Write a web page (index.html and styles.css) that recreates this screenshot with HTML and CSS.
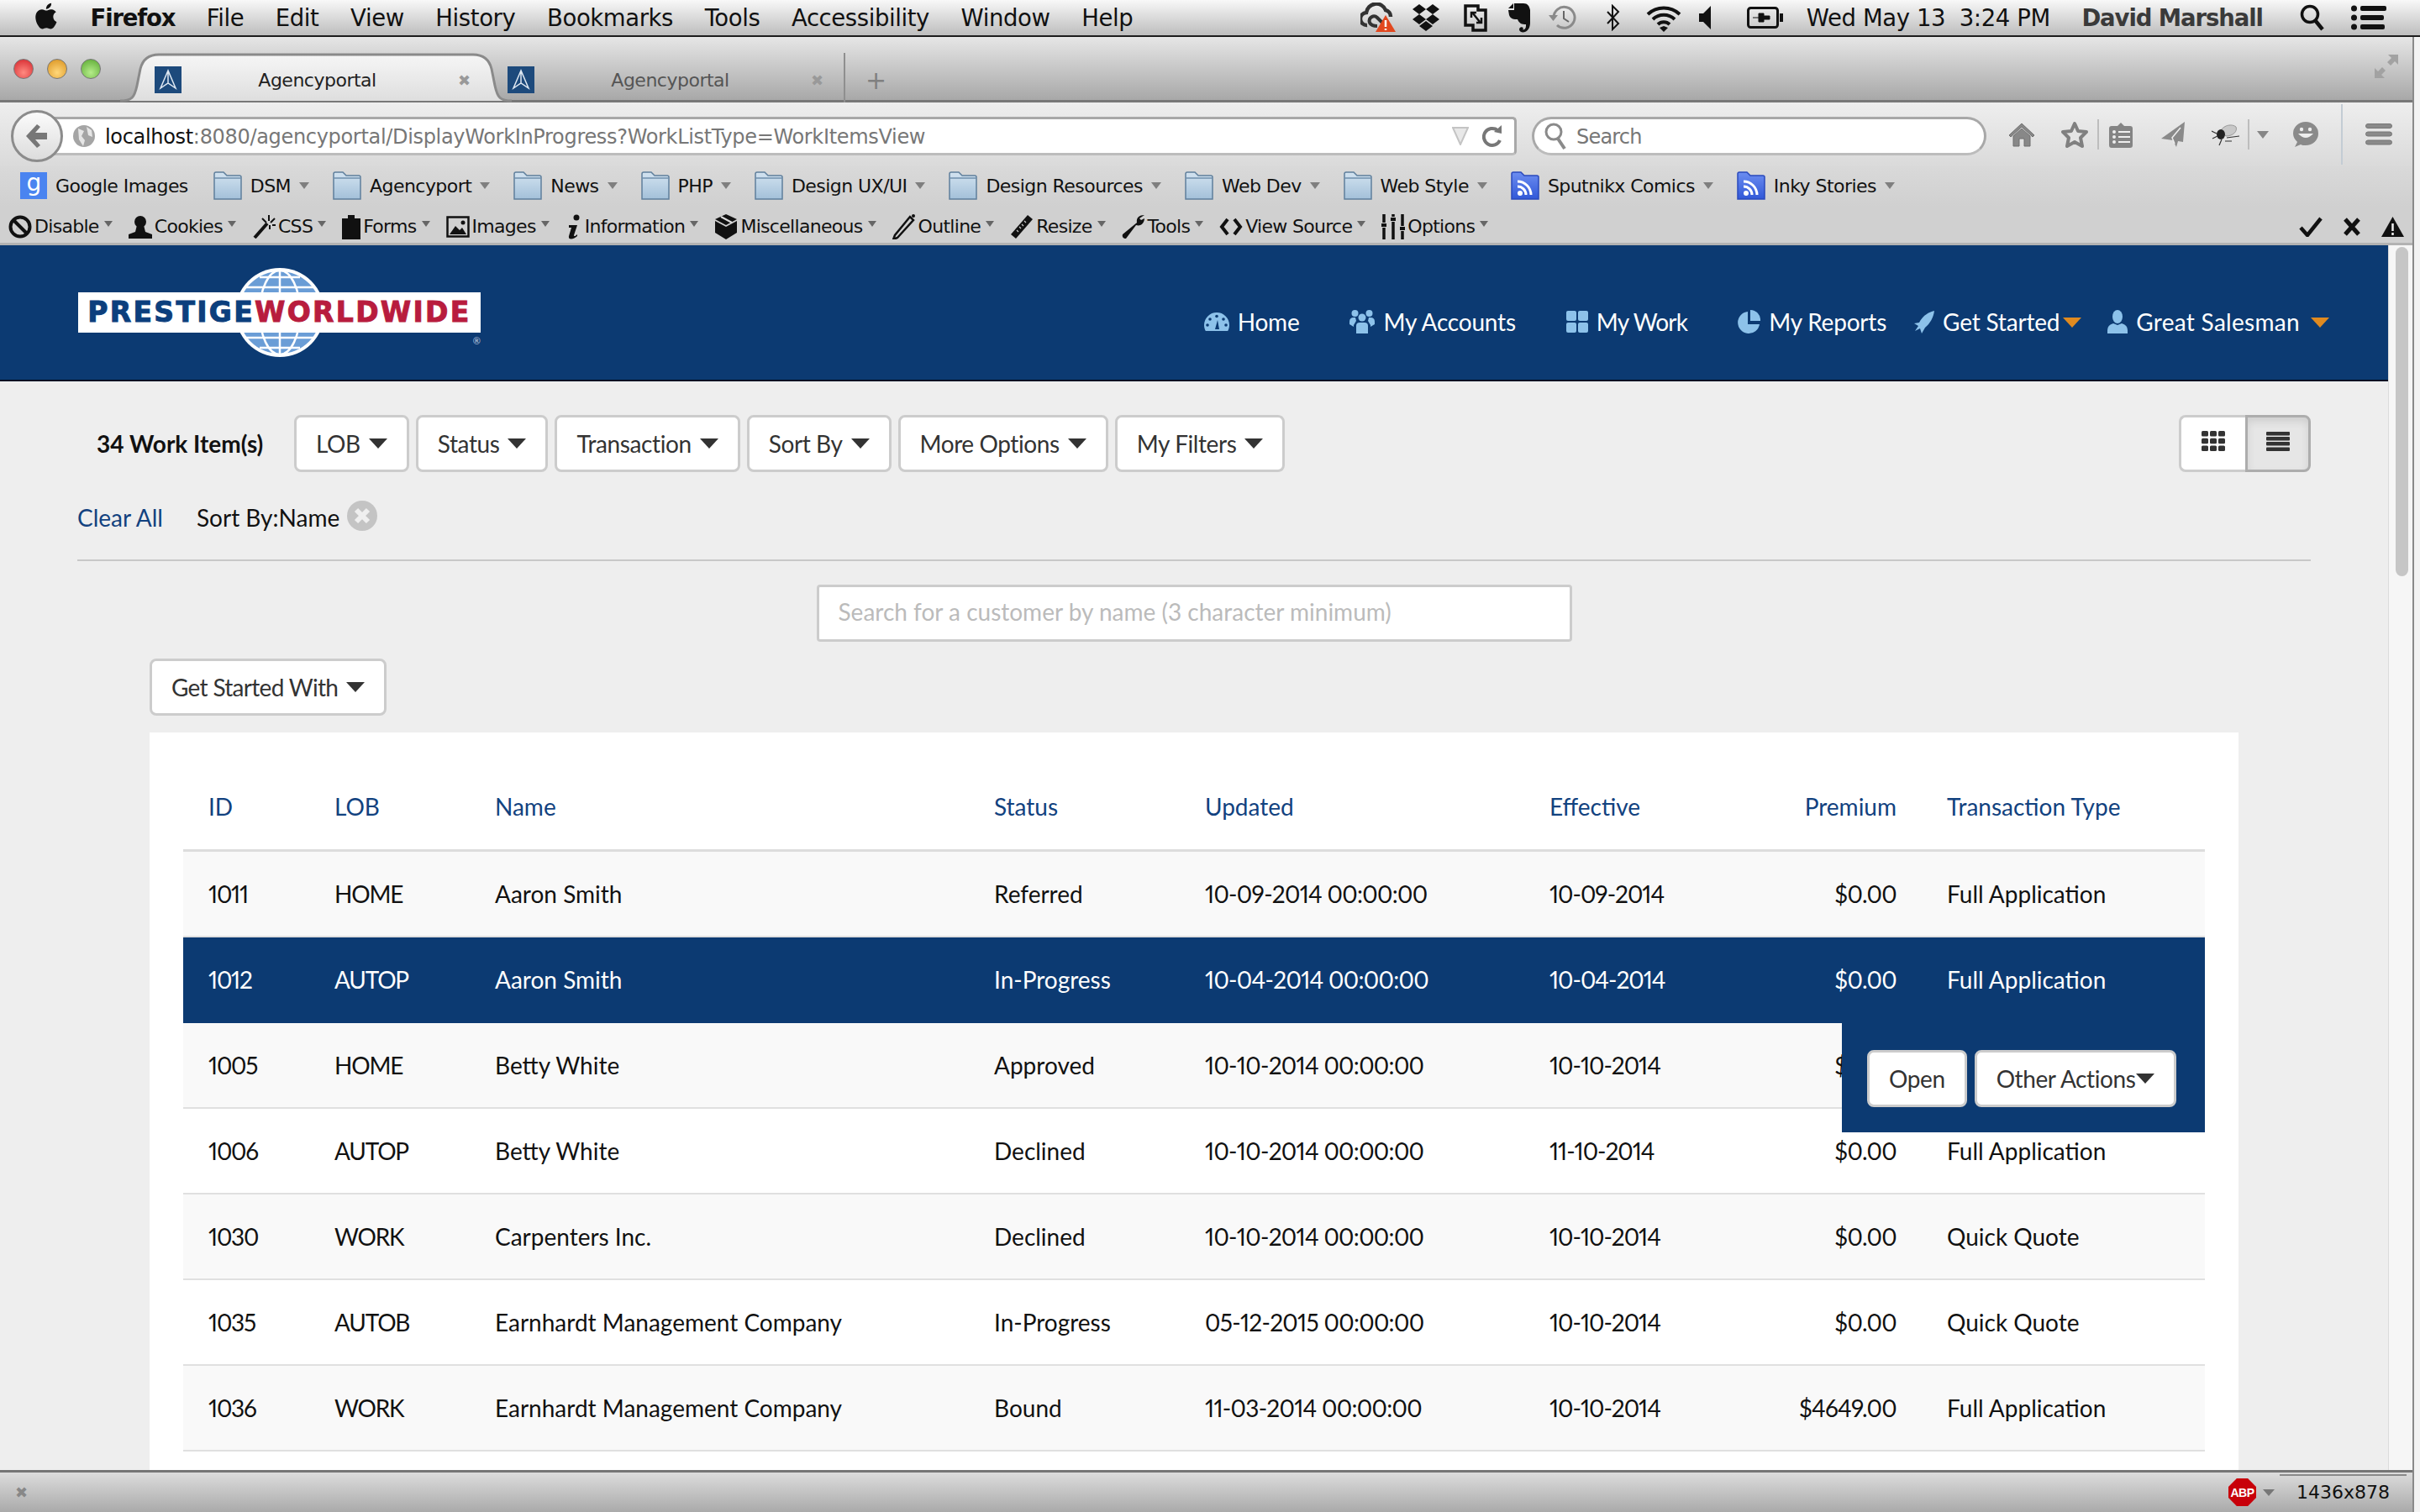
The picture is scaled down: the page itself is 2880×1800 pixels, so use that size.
FILE: index.html

```html
<!DOCTYPE html>
<html lang="en">
<head>
  <meta charset="UTF-8" />
  <title>Agencyportal</title>
  <link rel="stylesheet" href="styles.css">
</head>
<body>
  <svg class="defs" width="0" height="0">
    <defs>
      <linearGradient id="folderFill" x1="0" y1="0" x2="0" y2="1">
        <stop offset="0" stop-color="#d3e3f0"/>
        <stop offset="1" stop-color="#a3c0d9"/>
      </linearGradient>
      <linearGradient id="feedFill" x1="0" y1="0" x2="0" y2="1">
        <stop offset="0" stop-color="#6c8df0"/>
        <stop offset="1" stop-color="#3158d8"/>
      </linearGradient>
      <symbol id="folder" viewBox="0 0 34 34">
        <path d="M1 33V3q0-2 2-2h9l4 4h15q2 0 2 2v26z" fill="url(#folderFill)" stroke="#5f7f9c" stroke-width="1.5"/>
        <path d="M1 8h32" stroke="#6f8fac" stroke-width="1.5"/>
      </symbol>
      <symbol id="feed" viewBox="0 0 34 34">
        <path d="M1 33V3q0-2 2-2h9l4 4h15q2 0 2 2v26z" fill="url(#feedFill)" stroke="#2a49bd" stroke-width="1.5"/>
        <circle cx="11" cy="26" r="3" fill="#fff"/>
        <path d="M8 18a10 10 0 0 1 10 10M8 12a16 16 0 0 1 16 16" fill="none" stroke="#fff" stroke-width="3"/>
      </symbol>
      <symbol id="tabicon" viewBox="0 0 32 32">
        <rect width="32" height="32" fill="#1d4a7c"/>
        <path d="M16 5L7 26l9-6 9 6zM16 5v15" fill="none" stroke="#dfe8f2" stroke-width="1.5"/>
      </symbol>
    </defs>
  </svg>

  <div class="menubar">
    <svg class="apple" width="30" height="36" viewBox="0 0 22 28"><path d="M17.500 14.800c0-3 2.500-4.400 2.600-4.500-1.400-2.100-3.600-2.400-4.400-2.400-1.900-.2-3.600 1.100-4.600 1.100-.9 0-2.400-1.100-4-1.100-2 0-3.900 1.200-5 3-2.100 3.700-.5 9.100 1.500 12.100 1 1.500 2.200 3.100 3.800 3 1.500-.1 2.100-1 3.900-1 1.800 0 2.400 1 4 1 1.700 0 2.700-1.500 3.700-3 1.200-1.700 1.600-3.400 1.700-3.500-.1 0-3.200-1.200-3.200-4.700zM14.500 5.900c.8-1 1.400-2.400 1.200-3.800-1.200.1-2.700.8-3.500 1.800-.8.9-1.400 2.300-1.300 3.700 1.400.1 2.700-.7 3.600-1.700z" fill="#111"/></svg>
    <span class="menu-app">Firefox</span>
    <span>File</span><span>Edit</span><span>View</span><span>History</span><span>Bookmarks</span><span>Tools</span><span>Accessibility</span><span>Window</span><span>Help</span>
    <div class="tray">
      <svg class="t-cc" width="42" height="36" viewBox="0 0 42 36"><path d="M8 27a7.500 7.500 0 0 1-1-15 12 12 0 0 1 23-3 8 8 0 0 1 6 8" fill="none" stroke="#333" stroke-width="4.500"/><path d="M20 28c-3 0-7 0-9-4-2-6 5-10 9-6l6 6" fill="none" stroke="#333" stroke-width="4"/><path d="M30 15l12 20H18z" fill="#e2481f"/><path d="M30 21v8M30 31v2" stroke="#fff" stroke-width="2.500"/></svg>
      <svg class="t-drop" width="34" height="34" viewBox="0 0 34 34"><path d="M9 1l8 6-8 6-8-6zM25 1l8 6-8 6-8-6zM9 13l8 6-8 6-8-6zM25 13l8 6-8 6-8-6zM17 21l8 6-8 6-8-6z" fill="#111"/></svg>
      <svg class="t-par" width="28" height="34" viewBox="0 0 28 34"><path d="M2 3h15v5h9v24H11v-6H2z" fill="none" stroke="#111" stroke-width="3.500"/><path d="M11 12l8 10M9 17v-6h6M21 17v6h-6" fill="none" stroke="#111" stroke-width="2.500"/></svg>
      <svg class="t-ever" width="28" height="36" viewBox="0 0 28 36"><path d="M8 1h11c5 0 7 3 8 8v15c0 5-2 9-6 11-3 1-7 0-7-3 0-3 4-4 5-1l-1 1c2 1 4-1 4-4v-2c-5 0-8-1-10-6-4 0-8 0-10-5L1 9h7z" fill="#111"/><path d="M7 1L1 7h6z" fill="#111"/></svg>
      <svg class="t-time" width="34" height="34" viewBox="0 0 34 34"><path d="M7 17a12.500 12.500 0 1 1 4 9" fill="none" stroke="#8a8a8a" stroke-width="3"/><path d="M1 14h11l-5.500 7z" fill="#8a8a8a"/><path d="M19 9v9l6 4" fill="none" stroke="#666" stroke-width="2"/></svg>
      <svg class="t-blue" width="17" height="32" viewBox="0 0 17 32"><path d="M2 9l13 14-7 7V2l7 7L2 23" fill="none" stroke="#111" stroke-width="2"/></svg>
      <svg class="t-wifi" width="44" height="34" viewBox="0 0 44 34"><path d="M3 13a28 28 0 0 1 38 0M9 19a19 19 0 0 1 26 0M15 25a10 10 0 0 1 14 0" fill="none" stroke="#111" stroke-width="4"/><path d="M17 29l5-2 5 2-5 5z" fill="#111"/></svg>
      <svg class="t-vol" width="14" height="28" viewBox="0 0 14 28"><path d="M14 0v28L5 19H0V9h5z" fill="#111"/></svg>
      <svg class="t-batt" width="43" height="26" viewBox="0 0 43 26"><rect x="1.500" y="1.500" width="35" height="23" rx="3" fill="none" stroke="#111" stroke-width="3"/><rect x="39" y="8" width="4" height="10" fill="#111"/><path d="M7 13h7M14 8h6v3h7v4h-7v3h-6z" fill="#111" stroke="#111"/></svg>
    </div>
    <span class="menu-clock">Wed May 13&nbsp; 3:24 PM</span>
    <span class="menu-user">David Marshall</span>
    <svg class="m-search" width="30" height="32" viewBox="0 0 30 32"><circle cx="12" cy="12" r="9.500" fill="none" stroke="#111" stroke-width="3.500"/><path d="M18 19l9 11" stroke="#111" stroke-width="4.500"/></svg>
    <svg class="m-list" width="42" height="30" viewBox="0 0 42 30"><g fill="#111"><circle cx="3.500" cy="4" r="3.500"/><circle cx="3.500" cy="15" r="3.500"/><circle cx="3.500" cy="26" r="3.500"/><rect x="11" y="1" width="31" height="6" rx="2"/><rect x="11" y="12" width="28" height="6" rx="2"/><rect x="11" y="23" width="29" height="6" rx="2"/></g></svg>
  </div>

  <div class="window">
    <div class="tabstrip">
      <div class="lights"><i class="light red"></i><i class="light amber"></i><i class="light green"></i></div>
      <div class="tab is-active">
        <svg class="tab-shape" width="466" height="59" viewBox="0 0 466 59"><defs><linearGradient id="tabFill" x1="0" y1="0" x2="0" y2="1"><stop offset="0" stop-color="#f6f6f6"/><stop offset="1" stop-color="#dedede"/></linearGradient></defs><path d="M0 57c14 0 17-4 20-18l4-20C27 7 34 2 46 2h374c12 0 19 5 22 17l4 20c3 14 6 18 20 18" fill="url(#tabFill)" stroke="#8a8a8a" stroke-width="3"/></svg>
        <svg class="favicon" width="32" height="32"><use href="#tabicon"/></svg>
        <span class="tab-title">Agencyportal</span>
        <span class="tab-close">&#10006;</span>
      </div>
      <div class="tab">
        <svg class="favicon" width="32" height="32"><use href="#tabicon"/></svg>
        <span class="tab-title">Agencyportal</span>
        <span class="tab-close">&#10006;</span>
      </div>
      <span class="tab-new">+</span>
      <svg class="fullscreen" width="30" height="30" viewBox="0 0 30 30"><path d="M17 1h12v12l-4-4-5 5-4-4 5-5zM13 29H1V17l4 4 5-5 4 4-5 5z" fill="#a2a2a2"/></svg>
    </div>

    <div class="navbar">
      <div class="backbtn"><svg width="28" height="30" viewBox="0 0 28 30"><path d="M14 1L1 15l13 14 4-3-6-7h14v-8H12l6-7z" fill="#777"/></svg></div>
      <div class="urlbar">
        <svg class="globe-ico" width="28" height="32" viewBox="0 0 28 32"><circle cx="14" cy="16" r="13" fill="#a5a5a5"/><path d="M7 7l7 3-3 6 4 5-2 7-5-8zM17 5l6 4 1 8-5-2z" fill="#e6e6e6"/></svg>
        <span class="url-text"><b>localhost</b>:8080/agencyportal/DisplayWorkInProgress?WorkListType=WorkItemsView</span>
        <svg class="url-drop" width="20" height="22" viewBox="0 0 20 22"><path d="M1 1h18L10 21z" fill="#e8e8e8" stroke="#c4c4c4" stroke-width="2"/></svg>
        <svg class="url-reload" width="24" height="30" viewBox="0 0 24 30"><path d="M21 20a10 10 0 1 1-3-12" fill="none" stroke="#777" stroke-width="4"/><path d="M14 10l9-8v10z" fill="#777"/></svg>
      </div>
      <div class="searchbar">
        <svg width="28" height="34" viewBox="0 0 28 34"><circle cx="11" cy="12" r="9" fill="none" stroke="#8a8a8a" stroke-width="3"/><path d="M16 20l8 12" stroke="#8a8a8a" stroke-width="4"/></svg>
        <span>Search</span>
      </div>
      <div class="nav-tools">
        <svg class="n-home" width="32" height="29" viewBox="0 0 32 29"><path d="M16 1L1 15l2 2L16 5l13 12 2-2zM6 16v12h7v-9h6v9h7V16L16 7z" fill="#888" stroke="#6f6f6f"/></svg>
        <svg class="n-star" width="32" height="32" viewBox="0 0 32 32"><path d="M16 3l4 9 10 1-7 7 2 10-9-5-9 5 2-10-7-7 10-1z" fill="#e4e4e4" stroke="#808080" stroke-width="4" stroke-linejoin="round"/></svg>
        <i class="n-sep"></i>
        <svg class="n-clip" width="28" height="31" viewBox="0 0 28 31"><path d="M3 5h7l4-4 4 4h7q3 0 3 3v20q0 3-3 3H3q-3 0-3-3V8q0-3 3-3z" fill="#848484"/><g fill="#eee"><circle cx="6" cy="12" r="2"/><circle cx="6" cy="18" r="2"/><circle cx="6" cy="24" r="2"/><rect x="11" y="11" width="14" height="2"/><rect x="11" y="17" width="14" height="2"/><rect x="11" y="23" width="14" height="2"/></g></svg>
        <svg class="n-plane" width="28" height="32" viewBox="0 0 28 32"><path d="M28 1L0 21l14 2 4 8 2-7 6 1z" fill="#8a8a8a"/><path d="M23 8L13 20l3 7" fill="none" stroke="#eee" stroke-width="1.500"/></svg>
        <svg class="n-bug" width="33" height="28" viewBox="0 0 33 28"><path d="M11 9C15 3 24 1 29 5c2 5-3 11-12 11z" fill="#c8c8c8" stroke="#999"/><ellipse cx="11" cy="14" rx="5" ry="6" fill="#222"/><path d="M0 10l6 3M1 19l6-3M9 27l3-7M18 18l15-2M16 22l8 0" stroke="#333" stroke-width="1.200"/></svg>
        <i class="n-sep n-sep2"></i>
        <i class="n-caret"></i>
        <svg class="n-smile" width="32" height="32" viewBox="0 0 32 32"><path d="M16 1a15 14 0 0 1 0 28c-2 0-5 0-6-1l-7 3 3-6C3 22 1 19 1 15A15 14 0 0 1 16 1z" fill="#8a8a8a"/><circle cx="11" cy="10" r="2.200" fill="#eee"/><circle cx="21" cy="10" r="2.200" fill="#eee"/><path d="M7 15q9 10 18 0z" fill="#eee"/></svg>
        <i class="n-bigsep"></i>
        <svg class="n-burger" width="32" height="26" viewBox="0 0 32 26"><g fill="#8a8a8a" stroke="#777"><rect x=".5" y=".5" width="31" height="5" rx="2.500"/><rect x=".5" y="10" width="31" height="5" rx="2.500"/><rect x=".5" y="20" width="31" height="5" rx="2.500"/></g></svg>
      </div>
    </div>

    <div class="bookmarks">
      <div class="bm bm-first"><span class="g-icon">g</span><span>Google Images</span></div>
      <div class="bm"><svg width="34" height="34"><use href="#folder"/></svg><span>DSM</span><i class="bm-caret"></i></div>
      <div class="bm"><svg width="34" height="34"><use href="#folder"/></svg><span>Agencyport</span><i class="bm-caret"></i></div>
      <div class="bm"><svg width="34" height="34"><use href="#folder"/></svg><span>News</span><i class="bm-caret"></i></div>
      <div class="bm"><svg width="34" height="34"><use href="#folder"/></svg><span>PHP</span><i class="bm-caret"></i></div>
      <div class="bm"><svg width="34" height="34"><use href="#folder"/></svg><span>Design UX/UI</span><i class="bm-caret"></i></div>
      <div class="bm"><svg width="34" height="34"><use href="#folder"/></svg><span>Design Resources</span><i class="bm-caret"></i></div>
      <div class="bm"><svg width="34" height="34"><use href="#folder"/></svg><span>Web Dev</span><i class="bm-caret"></i></div>
      <div class="bm"><svg width="34" height="34"><use href="#folder"/></svg><span>Web Style</span><i class="bm-caret"></i></div>
      <div class="bm"><svg width="34" height="34"><use href="#feed"/></svg><span>Sputnikx Comics</span><i class="bm-caret"></i></div>
      <div class="bm"><svg width="34" height="34"><use href="#feed"/></svg><span>Inky Stories</span><i class="bm-caret"></i></div>
    </div>

    <div class="webdev">
      <div class="wd"><svg width="28" height="28" viewBox="0 0 28 28"><circle cx="14" cy="14" r="11.500" fill="none" stroke="#111" stroke-width="4"/><path d="M6 6l16 16" stroke="#111" stroke-width="4"/></svg><span>Disable</span><i class="wd-caret"></i></div>
      <div class="wd"><svg width="28" height="28" viewBox="0 0 28 28"><circle cx="14" cy="8" r="7" fill="#111"/><path d="M10 12h8l2 8 8 3v5H0v-5l8-3z" fill="#111"/></svg><span>Cookies</span><i class="wd-caret"></i></div>
      <div class="wd"><svg width="28" height="28" viewBox="0 0 28 28"><path d="M18 10L3 27" stroke="#111" stroke-width="4"/><path d="M20 0v7M12 4l5 5M27 4l-5 5M24 12h4M21 12v5" stroke="#111" stroke-width="2"/></svg><span>CSS</span><i class="wd-caret"></i></div>
      <div class="wd"><svg width="22" height="30" viewBox="0 0 22 30"><path d="M7 5V1h8v4h7v25H0V5z" fill="#111"/></svg><span>Forms</span><i class="wd-caret"></i></div>
      <div class="wd"><svg width="28" height="26" viewBox="0 0 28 26"><rect x="1.500" y="1.500" width="25" height="23" fill="none" stroke="#111" stroke-width="2.500"/><path d="M4 22l7-10 5 5 3-3 5 8z" fill="#111"/><circle cx="20" cy="8" r="2.500" fill="#111"/></svg><span>Images</span><i class="wd-caret"></i></div>
      <div class="wd"><svg width="20" height="30" viewBox="0 0 20 30"><circle cx="13" cy="4" r="3.500" fill="#111"/><path d="M4 13h10l-4 12c0 2 2 1 4-1v2c-3 3-11 6-10 0l3-10H4z" fill="#111"/></svg><span>Information</span><i class="wd-caret"></i></div>
      <div class="wd"><svg width="28" height="30" viewBox="0 0 28 30"><path d="M14 15L1 8v14l13 8z" fill="#111"/><path d="M14 15l13-7v14l-13 8z" fill="#111"/><path d="M1 6l13-6 13 6-13 7z" fill="#111"/><path d="M8 3l13 7" stroke="#ddd" stroke-width="2"/></svg><span>Miscellaneous</span><i class="wd-caret"></i></div>
      <div class="wd"><svg width="28" height="30" viewBox="0 0 28 30"><path d="M21 3L3 25l-2 5 5-2L25 7z" fill="none" stroke="#111" stroke-width="2.500"/><circle cx="25" cy="2" r="2" fill="#111"/></svg><span>Outline</span><i class="wd-caret"></i></div>
      <div class="wd"><svg width="28" height="30" viewBox="0 0 28 30"><path d="M21 1l6 5L7 29l-6-5z" fill="#111"/><path d="M8 19l2 2M11 15l2 2M14 12l2 2M17 8l2 2" stroke="#ccc" stroke-width="1.200"/></svg><span>Resize</span><i class="wd-caret"></i></div>
      <div class="wd"><svg width="28" height="30" viewBox="0 0 28 30"><path d="M27 1c-6 0-10 3-9 9L1 24c-1 3 1 5 4 5l12-16c6 2 10-3 10-8l-4 2-2-2z" fill="#111"/></svg><span>Tools</span><i class="wd-caret"></i></div>
      <div class="wd"><svg width="28" height="24" viewBox="0 0 28 24"><path d="M10 3L3 12l7 9M18 3l7 9-7 9" fill="none" stroke="#111" stroke-width="4"/></svg><span>View Source</span><i class="wd-caret"></i></div>
      <div class="wd"><svg width="28" height="30" viewBox="0 0 28 30"><path d="M3 0v10M3 16v14M14 0v3M14 9v21M25 0v14M25 20v10" stroke="#111" stroke-width="3.500"/><path d="M0 11h6v4H0zM11 4h6v4h-6zM22 15h6v4h-6z" fill="#111"/></svg><span>Options</span><i class="wd-caret"></i></div>
      <div class="wd-status">
        <svg width="28" height="24" viewBox="0 0 28 24"><path d="M2 13l8 9L26 2" fill="none" stroke="#111" stroke-width="4.500"/></svg>
        <svg width="20" height="22" viewBox="0 0 20 22"><path d="M2 2l16 18M18 2L2 20" stroke="#111" stroke-width="5"/></svg>
        <svg width="27" height="24" viewBox="0 0 27 24"><path d="M13.500 0L27 24H0z" fill="#111"/><path d="M13.500 8v9M13.500 19v3" stroke="#eee" stroke-width="2.500"/></svg>
      </div>
    </div>

    <div class="viewport">
      <div class="page">
        <header class="site-header">
          <div class="logo">
            <svg class="logo-globe" width="108" height="108" viewBox="0 0 108 108">
              <circle cx="54" cy="54" r="53" fill="#fff"/>
              <circle cx="54" cy="54" r="49" fill="#6a9dd6"/>
              <g fill="none" stroke="#fff" stroke-width="2.500">
                <ellipse cx="54" cy="54" rx="24" ry="50"/>
                <path d="M54 4v100M14 24h80M14 84h80M30 12h48M30 96h48"/>
              </g>
            </svg>
            <div class="logo-band"><span class="logo-blue">PRESTIGE</span><span class="logo-red">WORLDWIDE</span></div>
            <span class="logo-reg">&reg;</span>
          </div>
          <nav class="site-nav">
            <a class="nav-item"><svg width="30" height="22" viewBox="0 0 30 22"><path d="M15 0A15 15 0 0 0 0 15c0 2.600.7 5 1.800 7h26.400c1.100-2 1.800-4.400 1.800-7A15 15 0 0 0 15 0z" fill="#8dc2ea"/><g fill="#0c3a72"><circle cx="7" cy="8" r="1.800"/><circle cx="15" cy="4.500" r="1.800"/><circle cx="23" cy="8" r="1.800"/><circle cx="4" cy="15" r="1.800"/><circle cx="26" cy="15" r="1.800"/><path d="M13 20l3-11 2 11z"/></g></svg>Home</a>
            <a class="nav-item"><svg width="30" height="28" viewBox="0 0 30 28"><g fill="#8dc2ea"><circle cx="6.500" cy="4" r="4"/><circle cx="23.500" cy="4" r="4"/><circle cx="15" cy="9" r="4.500"/><path d="M8 28v-9q0-4 4-4h6q4 0 4 4v9q-7 1-14 0z"/><path d="M0 17v-3q0-5 5-5h2l1 4-3 5v2zM30 17v-3q0-5-5-5h-2l-1 4 3 5v2z"/></g></svg>My Accounts</a>
            <a class="nav-item nav-work"><svg width="26" height="26" viewBox="0 0 26 26"><g fill="#8dc2ea"><rect width="12" height="12" rx="2"/><rect x="14" width="12" height="12" rx="2"/><rect y="14" width="12" height="12" rx="2"/><rect x="14" y="14" width="12" height="12" rx="2"/></g></svg>My Work</a>
            <a class="nav-item"><svg width="27" height="28" viewBox="0 0 27 28"><path d="M12 2a13 13 0 1 0 14 15H12z" fill="#8dc2ea"/><path d="M15 0a12 12 0 0 1 12 13H15z" fill="#8dc2ea"/></svg>My Reports</a>
            <a class="nav-item nav-near"><svg width="26" height="27" viewBox="0 0 26 27"><path d="M26 0C17 2 11 8 8 14l-6 1 5 3-4 6 6-3 2 6 4-7C21 15 25 8 26 0z" fill="#8dc2ea"/></svg>Get Started<i class="nav-caret nav-caret-tight"></i></a>
            <a class="nav-item nav-near nav-user"><svg width="24" height="28" viewBox="0 0 24 28"><ellipse cx="12" cy="8" rx="6" ry="8" fill="#8dc2ea"/><path d="M0 28v-4q0-6 7-8l5 2 5-2q7 2 7 8v4z" fill="#8dc2ea"/></svg>Great Salesman<i class="nav-caret"></i></a>
          </nav>
        </header>

        <div class="content">
          <div class="filters">
            <span class="count">34 Work Item(s)</span>
            <button class="btn">LOB<i class="caret"></i></button>
            <button class="btn">Status<i class="caret"></i></button>
            <button class="btn">Transaction<i class="caret"></i></button>
            <button class="btn">Sort By<i class="caret"></i></button>
            <button class="btn">More Options<i class="caret"></i></button>
            <button class="btn">My Filters<i class="caret"></i></button>
            <div class="view-toggle">
              <button class="toggle"><svg width="28" height="24" viewBox="0 0 28 24"><g fill="#333"><rect width="8" height="6.500" rx="1.500"/><rect x="10" width="8" height="6.500" rx="1.500"/><rect x="20" width="8" height="6.500" rx="1.500"/><rect y="8.700" width="8" height="6.500" rx="1.500"/><rect x="10" y="8.700" width="8" height="6.500" rx="1.500"/><rect x="20" y="8.700" width="8" height="6.500" rx="1.500"/><rect y="17.500" width="8" height="6.500" rx="1.500"/><rect x="10" y="17.500" width="8" height="6.500" rx="1.500"/><rect x="20" y="17.500" width="8" height="6.500" rx="1.500"/></g></svg></button>
              <button class="toggle is-on"><svg width="28" height="23" viewBox="0 0 28 23"><g fill="#333"><rect width="28" height="4.500" rx="1"/><rect y="6" width="28" height="4.500" rx="1"/><rect y="12" width="28" height="4.500" rx="1"/><rect y="18.500" width="28" height="4.500" rx="1"/></g></svg></button>
            </div>
          </div>

          <div class="tags">
            <a class="clear-all">Clear All</a>
            <span class="tag">Sort By:Name</span>
            <span class="tag-x"><svg width="20" height="20" viewBox="0 0 20 20"><path d="M3 3l14 14M17 3L3 17" stroke="#efefef" stroke-width="6"/></svg></span>
          </div>

          <div class="rule"></div>

          <div class="customer-search">Search for a customer by name (3 character minimum)</div>
        </div>

        <button class="btn started">Get Started With<i class="caret"></i></button>

        <div class="card">
          <div class="table-wrap">
            <table class="work-table">
              <colgroup>
                <col class="c-id"><col class="c-lob"><col class="c-name"><col class="c-status"><col class="c-updated"><col class="c-effective"><col class="c-premium"><col class="c-type">
              </colgroup>
              <thead>
                <tr><th>ID</th><th>LOB</th><th>Name</th><th>Status</th><th>Updated</th><th>Effective</th><th class="num">Premium</th><th>Transaction Type</th></tr>
              </thead>
              <tbody>
                <tr class="odd"><td>1011</td><td>HOME</td><td>Aaron Smith</td><td>Referred</td><td>10-09-2014 00:00:00</td><td>10-09-2014</td><td class="num">$0.00</td><td>Full Application</td></tr>
                <tr class="selected"><td>1012</td><td>AUTOP</td><td>Aaron Smith</td><td>In-Progress</td><td>10-04-2014 00:00:00</td><td>10-04-2014</td><td class="num">$0.00</td><td>Full Application</td></tr>
                <tr class="odd"><td>1005</td><td>HOME</td><td>Betty White</td><td>Approved</td><td>10-10-2014 00:00:00</td><td>10-10-2014</td><td class="num">$0.00</td><td></td></tr>
                <tr><td>1006</td><td>AUTOP</td><td>Betty White</td><td>Declined</td><td>10-10-2014 00:00:00</td><td>11-10-2014</td><td class="num">$0.00</td><td>Full Application</td></tr>
                <tr class="odd"><td>1030</td><td>WORK</td><td>Carpenters Inc.</td><td>Declined</td><td>10-10-2014 00:00:00</td><td>10-10-2014</td><td class="num">$0.00</td><td>Quick Quote</td></tr>
                <tr><td>1035</td><td>AUTOB</td><td>Earnhardt Management Company</td><td>In-Progress</td><td>05-12-2015 00:00:00</td><td>10-10-2014</td><td class="num">$0.00</td><td>Quick Quote</td></tr>
                <tr class="odd"><td>1036</td><td>WORK</td><td>Earnhardt Management Company</td><td>Bound</td><td>11-03-2014 00:00:00</td><td>10-10-2014</td><td class="num">$4649.00</td><td>Full Application</td></tr>
              </tbody>
            </table>
            <div class="row-actions">
              <button class="btn">Open</button>
              <button class="btn btn-other">Other Actions<i class="caret"></i></button>
            </div>
          </div>
        </div>
      </div>
      <div class="scrolltrack"><div class="scrollthumb"></div></div>
    </div>

    <div class="statusbar">
      <span class="status-x">&#10006;</span>
      <span class="abp">ABP</span>
      <i class="abp-caret"></i>
      <span class="status-size">1436x878</span>
    </div>
  </div>
</body>
</html>
```

FILE: styles.css

```css
* {
  box-sizing: border-box;
}
body {
  margin: 0;
  width: 2880px;
  height: 1800px;
  overflow: hidden;
  background: #f3f3f3;
  font-family: "Lato", "Liberation Sans", sans-serif;
  font-size: 28px;
  color: #222;
}
.defs {
  display: block;
  height: 0;
}
button {
  font: inherit;
}

/* mac menu bar */
.menubar {
  display: flex;
  align-items: center;
  gap: 37.6px;
  height: 44px;
  padding: 0 40px;
  background: linear-gradient(#f8f8f8, #bdbdbd);
  border-bottom: 2px solid #1c1c1c;
  font-family: "DejaVu Sans", sans-serif;
  font-size: 27.5px;
  letter-spacing: -0.4px;
  color: #111;
}
.menu-app {
  font-weight: bold;
  letter-spacing: -1.2px;
}
.apple {
  flex: none;
  margin-top: -4px;
}
.tray {
  display: flex;
  align-items: center;
  margin-left: auto;
}
.t-drop { margin-left: 19px; }
.t-par { margin-left: 28px; }
.t-ever { margin-left: 24px; }
.t-time { margin-left: 20px; }
.t-blue { margin-left: 35px; }
.t-wifi { margin-left: 30px; }
.t-vol { margin-left: 20px; }
.t-batt { margin-left: 43px; }
.menu-clock {
  margin-left: -10px;
}
.menu-user {
  font-weight: bold;
  letter-spacing: -1.1px;
  color: #3a3a3a;
}
.m-search {
  margin-left: 7px;
}
.m-list {
  margin-left: -7px;
}

/* browser chrome */
.window {
  width: 2873px;
  height: 1756px;
  display: flex;
  flex-direction: column;
  border-right: 2px solid #8a8a8a;
  font-family: "DejaVu Sans", sans-serif;
}
.tabstrip {
  display: flex;
  align-items: flex-end;
  flex: none;
  height: 78px;
  padding-left: 16px;
  background: linear-gradient(#e6e6e6, #a8a8a8);
  border-bottom: 3px solid #787878;
}
.lights {
  display: flex;
  gap: 16px;
  align-self: flex-start;
  margin-top: 26px;
}
.light {
  width: 24px;
  height: 24px;
  border-radius: 50%;
  border: 1px solid #777;
}
.red { background: radial-gradient(circle at 50% 70%, #ff8a80, #d3222a); }
.amber { background: radial-gradient(circle at 50% 70%, #ffd77a, #d8901c); }
.green { background: radial-gradient(circle at 50% 70%, #b5ec8a, #58a72f); }
.tab {
  position: relative;
  display: flex;
  align-items: center;
  width: 443px;
  height: 59px;
  margin-bottom: -3px;
  padding: 5px 23px 0 41px;
  font-size: 22px;
  letter-spacing: -0.5px;
  color: #555;
}
.tab.is-active {
  margin-left: 23px;
  color: #222;
}
.tab + .tab {
  margin-left: -23px;
  border-right: 2px solid #8f8f8f;
  padding-right: 21px;
}
.tab-shape {
  position: absolute;
  left: 0;
  top: 0;
}
.favicon, .tab-title, .tab-close {
  position: relative;
}
.tab-title {
  flex: 1;
  text-align: center;
  padding-right: 6px;
}
.tab-close {
  width: 18px;
  font-size: 18px;
  color: #999;
}
.tab-new {
  margin: 0 0 8px 24px;
  font-size: 30px;
  line-height: 1;
  color: #808080;
}
.fullscreen {
  margin: 0 16px 25px auto;
}
.navbar {
  display: flex;
  align-items: center;
  flex: none;
  height: 76px;
  padding-top: 3px;
  background: linear-gradient(#eeeeee, #dadada);
}
.backbtn {
  position: relative;
  z-index: 1;
  display: flex;
  align-items: center;
  justify-content: center;
  flex: none;
  width: 62px;
  height: 62px;
  margin-left: 13px;
  border: 3px solid #8c8c8c;
  border-radius: 50%;
  background: linear-gradient(#fbfbfb, #dcdcdc);
}
.urlbar {
  display: flex;
  align-items: center;
  width: 1775px;
  height: 46px;
  margin-left: -45px;
  padding-left: 56px;
  background: #fff;
  border: 3px solid #a8a8a8;
  border-left: 0;
  border-radius: 0 5px 5px 0;
  border-bottom-color: #bcbcbc;
}
.globe-ico {
  flex: none;
}
.url-text {
  margin: 2px 0 0 11px;
  font-size: 24px;
  letter-spacing: -0.32px;
  color: #777;
  white-space: nowrap;
}
.url-text b {
  font-weight: normal;
  color: #111;
}
.url-drop {
  margin-left: auto;
}
.url-reload {
  margin: 0 14px 0 16px;
}
.searchbar {
  display: flex;
  align-items: center;
  gap: 10px;
  width: 541px;
  height: 46px;
  margin-left: 18px;
  padding-left: 12px;
  background: #fff;
  border: 3px solid #a8a8a8;
  border-bottom-color: #bcbcbc;
  border-radius: 23px;
  font-size: 24px;
  letter-spacing: -0.8px;
  color: #777;
}
.searchbar span {
  margin-top: 2px;
}
.nav-tools {
  display: flex;
  align-items: center;
  flex: 1;
  height: 72px;
  margin-top: -3px;
}
.n-home { margin-left: 26px; }
.n-star { margin-left: 31px; }
.n-sep {
  width: 2px;
  height: 36px;
  margin-left: 11px;
  background: #bdbdbd;
}
.n-clip { margin-left: 12px; }
.n-plane { margin-left: 34px; }
.n-bug { margin-left: 32px; }
.n-sep2 { margin-left: 10px; }
.n-caret {
  width: 0;
  height: 0;
  margin-left: 9px;
  border-left: 7px solid transparent;
  border-right: 7px solid transparent;
  border-top: 9px solid #868686;
}
.n-smile { margin-left: 28px; }
.n-bigsep {
  width: 2px;
  height: 72px;
  margin-left: 26px;
  background: #c3ccd4;
}
.n-burger { margin-left: 27px; }
.bookmarks {
  display: flex;
  align-items: center;
  gap: 28px;
  flex: none;
  height: 48px;
  padding: 0 0 2px 24px;
  background: linear-gradient(#d9d9d9, #d0d0d0);
  font-size: 22px;
  letter-spacing: -0.55px;
  color: #111;
}
.bm {
  display: flex;
  align-items: center;
  gap: 10px;
  white-space: nowrap;
}
.bm-first {
  margin-right: 2px;
}
.g-icon {
  display: flex;
  justify-content: center;
  align-items: center;
  width: 32px;
  height: 32px;
  background: #4a84f0;
  color: #fff;
  font-size: 28px;
  line-height: 1;
  padding-bottom: 6px;
}
.bm-caret {
  width: 0;
  height: 0;
  border-left: 6px solid transparent;
  border-right: 6px solid transparent;
  border-top: 8px solid #7f7f7f;
}
.webdev {
  display: flex;
  align-items: center;
  gap: 19px;
  flex: none;
  height: 46px;
  padding: 4px 10px 0;
  background: #d0d0d0;
  border-bottom: 3px solid #b2b2b2;
  font-size: 22px;
  letter-spacing: -0.7px;
  color: #111;
}
.wd {
  display: flex;
  align-items: center;
  gap: 3px;
  white-space: nowrap;
}
.wd-caret {
  width: 0;
  height: 0;
  margin: 0 0 6px 3px;
  border-left: 5px solid transparent;
  border-right: 5px solid transparent;
  border-top: 7px solid #666;
}
.wd-status {
  display: flex;
  align-items: center;
  gap: 25px;
  margin-left: auto;
}

/* page */
.viewport {
  display: flex;
  flex: 1;
  min-height: 0;
  font-family: "Lato", "Liberation Sans", sans-serif;
}
.page {
  width: 2842px;
  background: #eeeeee;
  overflow: hidden;
}
.scrolltrack {
  flex: 1;
  padding: 2px 5px 0 8px;
  background: #f6f6f6;
  border-left: 1px solid #dcdcdc;
}
.scrollthumb {
  height: 392px;
  border-radius: 8px;
  background: #c6c6c6;
}
.site-header {
  display: flex;
  align-items: center;
  height: 162px;
  padding-left: 93px;
  background: #0c3a72;
  border-bottom: 2px solid #000f22;
}
.logo {
  display: grid;
  width: 479px;
  height: 108px;
}
.logo > * {
  grid-area: 1 / 1;
}
.logo-globe {
  justify-self: center;
}
.logo-band {
  align-self: center;
  display: flex;
  justify-content: center;
  height: 48px;
  background: #fff;
  font-family: "DejaVu Sans", sans-serif;
  font-weight: bold;
  font-size: 33px;
  line-height: 48px;
  letter-spacing: 2.3px;
  -webkit-text-stroke: 1px currentColor;
}
.logo-blue { color: #0c3f7d; }
.logo-red { color: #b81c3e; }
.logo-reg {
  justify-self: end;
  align-self: end;
  margin-bottom: 14px;
  font-size: 11px;
  color: #c6d4e4;
}
.site-nav {
  display: flex;
  align-items: center;
  justify-content: flex-end;
  flex: 1;
  padding: 22px 70px 0 0;
  gap: 60px;
}
.nav-item {
  display: flex;
  align-items: center;
  gap: 10px;
  color: #fff;
  white-space: nowrap;
  letter-spacing: -0.2px;
}
.nav-work {
  letter-spacing: -0.8px;
}
.nav-near {
  margin-left: -29px;
}
.nav-user {
  letter-spacing: 0.3px;
}
.nav-caret {
  width: 0;
  height: 0;
  margin: 2px 0 0 3px;
  border-left: 11px solid transparent;
  border-right: 11px solid transparent;
  border-top: 12px solid #e08a20;
}
.nav-caret-tight {
  margin-left: -6px;
}
.content {
  padding: 40px 92px 0;
}
.filters {
  display: flex;
  align-items: center;
  gap: 8px;
}
.count {
  margin: 0 20px 0 23px;
  color: #111;
  font-weight: 700;
  width: 207px;
  white-space: nowrap;
}
.btn {
  display: inline-flex;
  align-items: center;
  height: 68px;
  padding: 0 23px;
  background: #fff;
  border: 3px solid #cccccc;
  border-radius: 8px;
  color: #333;
  letter-spacing: -0.4px;
  white-space: nowrap;
}
.caret {
  width: 0;
  height: 0;
  margin-left: 10px;
  border-left: 11px solid transparent;
  border-right: 11px solid transparent;
  border-top: 12px solid #333;
}
.btn-other .caret {
  margin-left: 1px;
}
.view-toggle {
  display: flex;
  margin-left: auto;
}
.toggle {
  display: flex;
  align-items: center;
  justify-content: center;
  width: 79px;
  height: 68px;
  padding: 0 0 6px;
  background: #fff;
  border: 3px solid #cccccc;
  border-right: 0;
  border-radius: 8px 0 0 8px;
}
.toggle.is-on {
  width: 78px;
  background: #e6e6e6;
  border: 3px solid #adadad;
  border-radius: 0 8px 8px 0;
  box-shadow: inset 0 5px 10px rgba(0, 0, 0, 0.1);
}
.tags {
  display: flex;
  align-items: center;
  height: 36px;
  margin-top: 36px;
}
.clear-all {
  color: #12427f;
}
.tag {
  margin-left: 40px;
  color: #111;
}
.tag-x {
  display: flex;
  align-items: center;
  justify-content: center;
  width: 36px;
  height: 36px;
  margin: -4px 0 0 9px;
  border-radius: 50%;
  background: #c4c4c4;
}
.rule {
  margin-top: 32px;
  border-top: 2px solid #c8c8c8;
}
.customer-search {
  width: 899px;
  height: 68px;
  margin: 28px auto 0;
  padding: 13px 23px 0;
  background: #fff;
  border: 3px solid #cccccc;
  border-radius: 4px;
  color: #bbbbbb;
  line-height: 32px;
  white-space: nowrap;
}
.started {
  margin: 20px 0 0 178px;
  letter-spacing: -0.7px;
}
.card {
  height: 900px;
  margin: 20px 178px 0;
  padding: 0 40px;
  background: #fff;
}
.table-wrap {
  position: relative;
}
.work-table {
  width: 2406px;
  table-layout: fixed;
  border-collapse: collapse;
  font-variant-numeric: proportional-nums;
  font-feature-settings: "pnum";
}
.c-id { width: 150px; }
.c-lob { width: 191px; }
.c-name { width: 594px; }
.c-status { width: 251px; }
.c-updated { width: 410px; }
.c-effective { width: 186px; }
.c-premium { width: 287px; }
.c-type { width: 337px; }
.work-table th {
  height: 140px;
  padding: 71px 30px 34px;
  font-weight: 400;
  line-height: 34px;
  text-align: left;
  color: #12427f;
  border-bottom: 3px solid #dddddd;
}
.work-table td {
  height: 102px;
  padding: 0 30px;
  color: #111;
  white-space: nowrap;
  border-bottom: 2px solid #e0e0e0;
}
.work-table td:nth-child(1),
.work-table td:nth-child(2) {
  letter-spacing: -1.2px;
}
.work-table td:nth-child(5),
.work-table td:nth-child(7) {
  letter-spacing: -0.7px;
}
.work-table td:nth-child(6) {
  letter-spacing: -1px;
}
.work-table .num {
  text-align: right;
}
.odd {
  background: #f9f9f9;
}
.work-table .selected td {
  background: #0c3a72;
  color: #fff;
  border-bottom-color: #0c3a72;
}
.row-actions {
  position: absolute;
  top: 346px;
  right: 0;
  display: flex;
  gap: 9px;
  width: 432px;
  height: 130px;
  padding: 32px 30px;
  background: #0c3a72;
}
.statusbar {
  display: flex;
  align-items: center;
  flex: none;
  height: 50px;
  padding-left: 18px;
  background: linear-gradient(#dcdcdc, #aaaaaa);
  border-top: 3px solid #757575;
  position: relative;
}
.status-x {
  font-size: 18px;
  color: #888;
}
.abp {
  display: flex;
  align-items: center;
  justify-content: center;
  width: 33px;
  height: 33px;
  margin-left: auto;
  clip-path: polygon(30% 0, 70% 0, 100% 30%, 100% 70%, 70% 100%, 30% 100%, 0 70%, 0 30%);
  background: #c8000a;
  color: #fff;
  font-family: "Liberation Sans", sans-serif;
  font-weight: bold;
  font-size: 14px;
  letter-spacing: -0.5px;
}
.abp-caret {
  width: 0;
  height: 0;
  margin-left: 8px;
  border-left: 7px solid transparent;
  border-right: 7px solid transparent;
  border-top: 8px solid #777;
}
.status-size {
  margin: 0 27px 0 26px;
  font-size: 22px;
  color: #111;
}
.statusbar::after {
  content: "";
  position: absolute;
  top: 2px;
  left: 2713px;
  width: 151px;
  border-top: 2px solid #8a8a8a;
}
```
